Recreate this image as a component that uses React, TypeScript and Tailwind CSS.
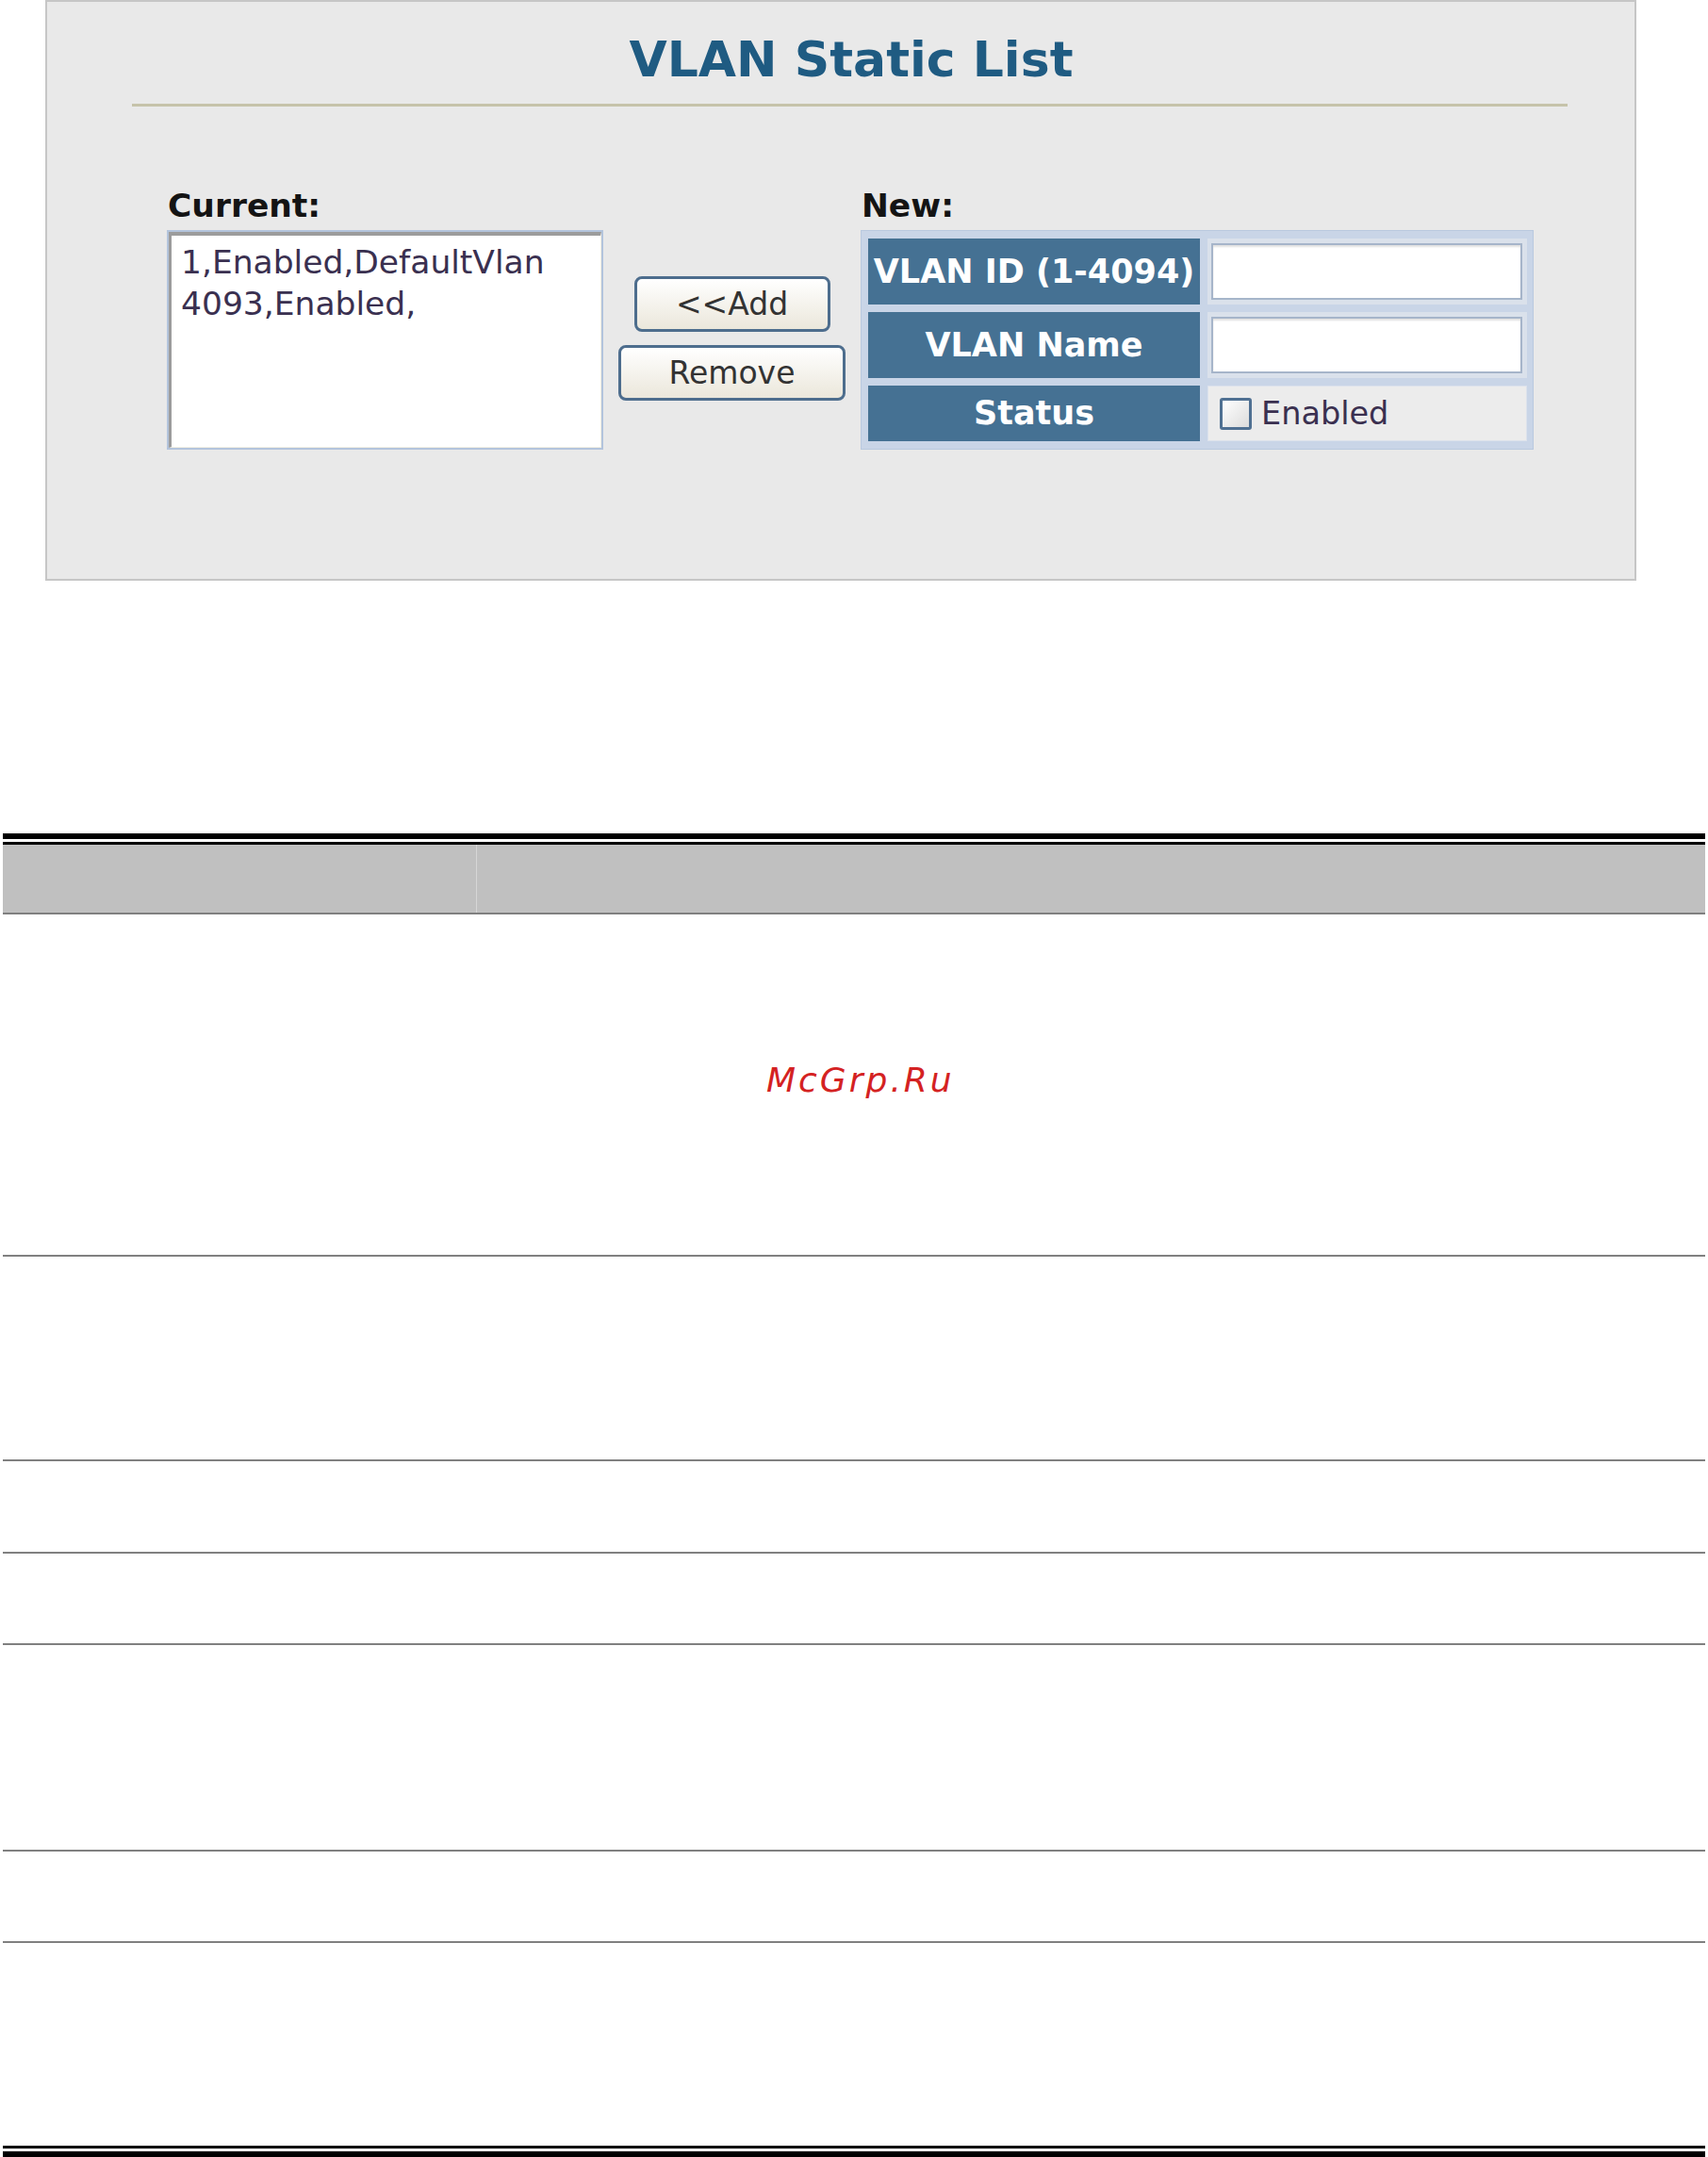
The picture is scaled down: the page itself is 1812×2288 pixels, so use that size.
import React from "react";

const font = "font-['DejaVu_Sans',Verdana,sans-serif]";

function Field() {
	return (
		<div className="h-[60px] w-[330px] border-2 border-[#a6b5ca] bg-white shadow-[inset_0_2px_2px_rgba(0,0,0,0.12)]" />
	);
}

function FormButton({ label, width }: { label: string; width: string }) {
	return (
		<button
			type="button"
			className={`${width} flex h-[59px] items-center justify-center rounded-[8px] border-[3px] border-[#4d6d8d] bg-gradient-to-b from-white to-[#ebe7db] text-[33px] leading-none text-[#333]`}
		>
			{label}
		</button>
	);
}

function VlanPanel() {
	return (
		<div className="ml-[48px] h-[616px] w-[1688px] border-2 border-[#c6c6c6] bg-[#e9e9e9]">
			{/* Title */}
			<div className="pt-[31px] pl-[22px] text-center text-[52px] leading-[60px] font-bold text-[#1f5b82]">
				VLAN Static List
			</div>
			<div className="mt-[17px] ml-[90px] h-[3px] w-[1523px] bg-[#c6c3aa]" />

			<div className="mt-[85px] flex items-start pl-[127px]">
				{/* Current list */}
				<div className="w-[463px]">
					<div className="pl-[1px] text-[34.5px] leading-[40px] font-bold text-[#141414]">Current:</div>
					<div className="mt-[6px] h-[233px] border-2 border-[#b3c4dc]">
						<div className="h-full border-t-[4px] border-r border-b border-l-[3px] border-t-[#9c9c9c] border-r-[#f2efe4] border-b-[#f2efe4] border-l-[#9c9c9c] bg-white pt-[6px] pl-[10px] text-[34.5px] leading-[44px] text-[#3a3050]">
							<div>1,Enabled,DefaultVlan</div>
							<div>4093,Enabled,</div>
						</div>
					</div>
				</div>

				{/* Buttons */}
				<div className="flex w-[273px] flex-col items-center gap-[14px] pt-[95px]">
					<FormButton label="<<Add" width="w-[208px]" />
					<FormButton label="Remove" width="w-[241px]" />
				</div>

				{/* New entry */}
				<div className="w-[714px]">
					<div className="pl-[1px] text-[34.5px] leading-[40px] font-bold text-[#141414]">New:</div>
					<div className="mt-[6px] h-[233px] border border-[#b9c9df] bg-[#c9d5e7] pt-[8px] pl-[7px]">
						<div className="grid grid-cols-[352px_339px] grid-rows-[70px_70px_59px] gap-[8px]">
							<div className="flex items-center justify-center bg-[#457193] text-[35px] font-bold whitespace-nowrap text-white">
								VLAN ID (1-4094)
							</div>
							<div className="flex items-center bg-[#dae1eb] pl-[4px]">
								<Field />
							</div>
							<div className="flex items-center justify-center bg-[#457193] text-[35px] font-bold text-white">
								VLAN Name
							</div>
							<div className="flex items-center bg-[#dae1eb] pl-[4px]">
								<Field />
							</div>
							<div className="flex items-center justify-center bg-[#457193] text-[35px] font-bold text-white">
								Status
							</div>
							<div className="flex items-center border border-[#dce2ec] bg-[#ececec] pl-[12px]">
								<div className="h-[34px] w-[34px] rounded-[3px] border-[3px] border-[#4f7092] bg-gradient-to-br from-white to-[#dcdcdc]" />
								<span className="ml-[10px] text-[33.5px] leading-none text-[#3a3050]">Enabled</span>
							</div>
						</div>
					</div>
				</div>
			</div>
		</div>
	);
}

const bodyRows = ["h-[363px]", "h-[217px]", "h-[98px]", "h-[97px]", "h-[219px]", "h-[97px]"];

function DocTable() {
	return (
		<div className="mx-[3px] mt-[268px]">
			<div className="h-[6px] bg-black" />
			<div className="h-[3px]" />
			<div className="h-[3px] bg-black" />
			{/* Header */}
			<div className="flex h-[74px] border-b-2 border-[#808080] bg-[#c0c0c0]">
				<div className="w-[503px] border-r border-[#d6d6d6]" />
				<div className="flex-1" />
			</div>
			{bodyRows.map((h, i) => (
				<div key={i} className={`${h} border-b-2 border-[#808080]`} />
			))}
			<div className="h-[215px]" />
			<div className="h-[3px] bg-black" />
			<div className="h-[3px]" />
			<div className="h-[6px] bg-black" />
		</div>
	);
}

export default function App() {
	return (
		<div className={`relative h-[2288px] w-[1812px] overflow-hidden bg-white ${font}`}>
			<VlanPanel />
			<DocTable />
			{/* Watermark */}
			<div className="absolute top-[1124px] left-[813px] text-[36px] leading-[44px] tracking-[3px] text-[#d42222] italic">
				McGrp.Ru
			</div>
		</div>
	);
}
